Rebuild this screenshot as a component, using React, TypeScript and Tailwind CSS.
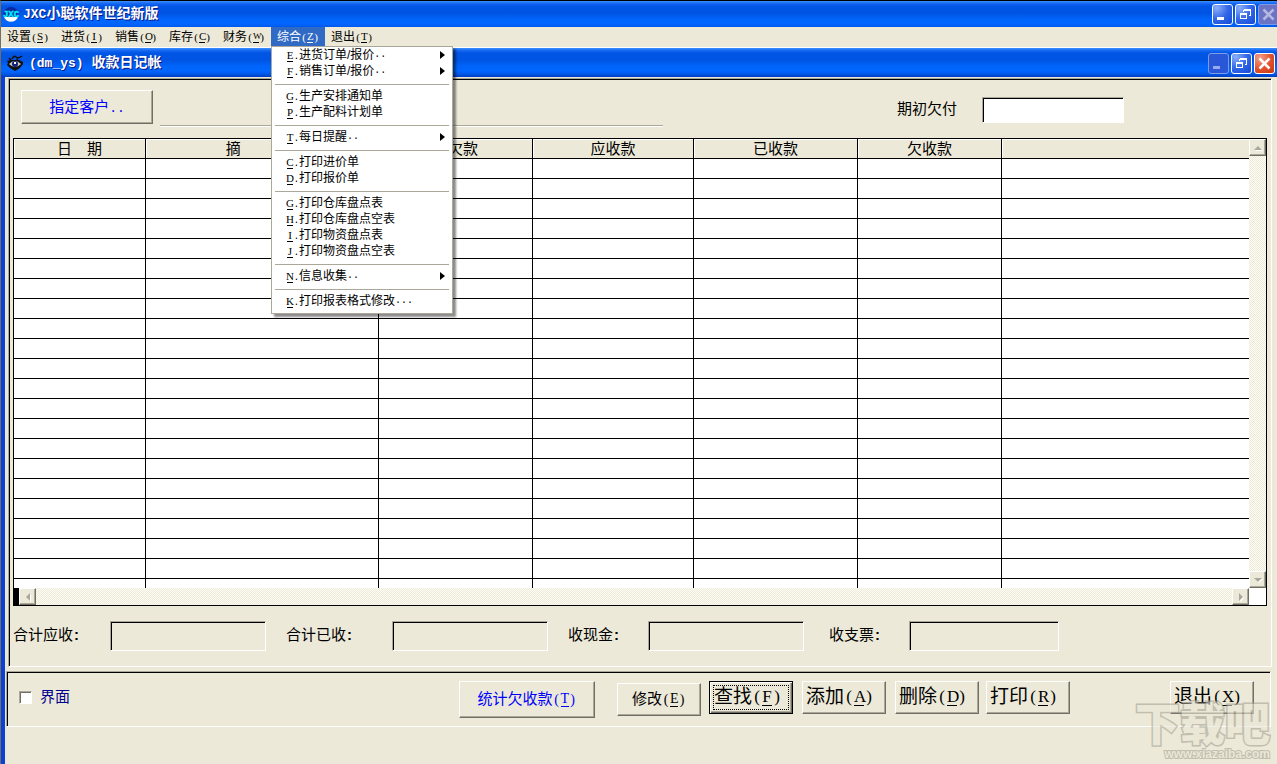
import React from 'react';
import clsx from 'clsx';

const menus = [
  { label: '设置', hotkey: 'S' },
  { label: '进货', hotkey: 'I' },
  { label: '销售', hotkey: 'O' },
  { label: '库存', hotkey: 'C' },
  { label: '财务', hotkey: 'W' },
  { label: '综合', hotkey: 'Z', open: true },
  { label: '退出', hotkey: 'T' },
];

const menuGroups = [
  [
    { hotkey: 'E', label: '进货订单/报价', dots: '..', sub: true },
    { hotkey: 'F', label: '销售订单/报价', dots: '..', sub: true },
  ],
  [
    { hotkey: 'G', label: '生产安排通知单' },
    { hotkey: 'P', label: '生产配料计划单' },
  ],
  [{ hotkey: 'T', label: '每日提醒', dots: '..', sub: true }],
  [
    { hotkey: 'C', label: '打印进价单' },
    { hotkey: 'D', label: '打印报价单' },
  ],
  [
    { hotkey: 'G', label: '打印仓库盘点表' },
    { hotkey: 'H', label: '打印仓库盘点空表' },
    { hotkey: 'I', label: '打印物资盘点表' },
    { hotkey: 'J', label: '打印物资盘点空表' },
  ],
  [{ hotkey: 'N', label: '信息收集', dots: '..', sub: true }],
  [{ hotkey: 'K', label: '打印报表格式修改', dots: '...' }],
];

const columns = [
  { title: '日　期', width: 'w-[132px]' },
  { title: '摘　　   要', width: 'w-[233px]' },
  { title: '前欠款', width: 'w-[154px]' },
  { title: '应收款', width: 'w-[161px]' },
  { title: '已收款', width: 'w-[164px]' },
  { title: '欠收款', width: 'w-[144px]' },
  { title: '', width: '' },
];

const totals = [
  { id: 'receivable', label: '合计应收', labelWidth: 'w-[97px]', width: 'w-[156px]', gap: '' },
  { id: 'received', label: '合计已收', labelWidth: 'w-[106px]', width: 'w-[156px]', gap: 'ml-5' },
  { id: 'cash', label: '收现金', labelWidth: 'w-20', width: 'w-[156px]', gap: 'ml-5' },
  { id: 'cheque', label: '收支票', labelWidth: 'w-20', width: 'w-[150px]', gap: 'ml-[25px]' },
];

const sunken =
  'border border-t-[#aca899] border-l-[#aca899] border-r-white border-b-white shadow-[inset_1px_1px_#000]';
const raised =
  'border border-t-white border-l-white border-r-[#716f64] border-b-[#716f64] shadow-[inset_-1px_-1px_#aca899] bg-[#ece9d8]';
const dither = 'bg-[repeating-conic-gradient(#fffef6_0_25%,#ece9d8_0_50%)] bg-[length:2px_2px]';
const titleBar =
  'bg-[linear-gradient(180deg,#3c94ff_0,#1c6cf4_2px,#0055e5_5px,#0054e3_12px,#0064fa_18px,#0066ff_23px,#0058e8_26px,#003dc0_100%)]';

// Accelerator such as (S), set in half-width cells
function Hotkey({ letter, size = 'sm' }: { letter: string; size?: 'sm' | 'md' | 'lg' }) {
  const cell = clsx('inline-block text-center', {
    'w-[6px]': size === 'sm',
    'w-[8px]': size === 'md',
    'w-[10px]': size === 'lg',
  });
  return (
    <span
      className={clsx('inline-flex items-center justify-center font-["Liberation_Serif",serif]', {
        'text-[11px] leading-[11px]': size === 'sm',
        'text-[14px] leading-[14px]': size === 'md',
        'text-[17px] leading-[17px]': size === 'lg',
      })}
    >
      <span className={cell}>(</span>
      <span
        className={clsx(
          cell,
          'flex justify-center border-b border-current',
          letter === 'W' && 'text-[9px]',
        )}
      >
        {letter}
      </span>
      <span className={cell}>)</span>
    </span>
  );
}

function CaptionButton({ kind, dim }: { kind: 'min' | 'restore' | 'close'; dim?: boolean }) {
  const names = { min: '最小化', restore: '还原', close: '关闭' };
  return (
    <button
      type="button"
      aria-label={names[kind]}
      className={clsx(
        'flex h-[21px] w-[21px] shrink-0 items-center justify-center rounded-[3px] border',
        dim ? 'border-[#7f9be8]' : 'border-white',
        kind === 'close' && !dim && 'bg-[radial-gradient(circle_at_25%_20%,#f0a088,#e2502c_55%,#c03810)]',
        kind === 'close' && dim && 'bg-[#6a73c4]',
        kind !== 'close' && !dim && 'bg-[radial-gradient(circle_at_20%_15%,#8cb0f8,#3468e8_50%,#1248d8)]',
        kind !== 'close' && dim && 'bg-[#2a56d8]',
      )}
    >
      <svg width="19" height="19" viewBox="0 0 19 19" shapeRendering="crispEdges" className={dim ? 'opacity-50' : ''}>
        {kind === 'min' && <path d="M4 12h7v3H4z" fill="#fff" />}
        {kind === 'restore' && (
          <path
            d="M7 4h7v6h-2M7 4v2M7 5h7M4 8h6v5H4zM4 9h6"
            transform="translate(.5 .5)"
            fill="none"
            stroke="#fff"
            strokeWidth="1"
          />
        )}
        {kind === 'close' && (
          <path d="M4.500 4.500l10 10M14.500 4.500l-10 10" stroke="#fff" strokeWidth="2.500" shapeRendering="auto" />
        )}
      </svg>
    </button>
  );
}

function ScrollButton({ dir }: { dir: 'up' | 'down' | 'left' | 'right' }) {
  const paths = {
    up: 'M3 9L7 5L11 9Z',
    down: 'M3 5L7 9L11 5Z',
    left: 'M9 3L5 7L9 11Z',
    right: 'M5 3L9 7L5 11Z',
  };
  const names = { up: '向上', down: '向下', left: '向左', right: '向右' };
  return (
    <button
      type="button"
      aria-label={names[dir]}
      className={clsx('flex h-[17px] w-[17px] shrink-0 items-center justify-center', raised)}
    >
      <svg width="14" height="14" viewBox="0 0 14 14">
        <path d={paths[dir]} fill="#fff" transform="translate(1 1)" />
        <path d={paths[dir]} fill="#aca899" />
      </svg>
    </button>
  );
}

function PopupMenu() {
  return (
    <div
      role="menu"
      className="absolute top-full left-0 z-20 w-[182px] border border-[#aca899] bg-white pb-1 text-black shadow-[3px_3px_2px_rgba(0,0,0,0.45)]"
    >
      {menuGroups.map((group, i) => (
        <div key={i}>
          {i > 0 && <hr className="mx-[3px] mt-[5px] mb-[3px] border-t border-[#aca899]" />}
          {group.map((item) => (
            <button
              key={item.hotkey}
              type="button"
              role="menuitem"
              className="flex h-4 w-full items-center pr-[7px] pl-[15px] text-[12px] leading-4 whitespace-nowrap"
            >
              <span className='flex w-[6px] justify-center border-b border-black font-["Liberation_Serif",serif] text-[11px] leading-[12px]'>
                {item.hotkey}
              </span>
              <span className="w-[6px] pl-px">.</span>
              <span>{item.label}</span>
              {item.dots && <span className='font-["Liberation_Mono",monospace] text-[10px]'>{item.dots}</span>}
              {item.sub && (
                <svg width="5" height="8" viewBox="0 0 5 8" className="ml-auto">
                  <path d="M0 0L5 4L0 8Z" />
                </svg>
              )}
            </button>
          ))}
        </div>
      ))}
    </div>
  );
}

function MainTitle() {
  return (
    <header className={clsx('flex h-[26px] items-center overflow-hidden pl-[2px]', titleBar)}>
      <svg width="16" height="17" viewBox="0 0 16 17" className="shrink-0">
        <circle cx="8" cy="8.500" r="7.500" fill="#0a2a9c" />
        <path d="M1 11h14a7.500 7.500 0 0 1-14 0z" fill="#fff" />
        <text x="8" y="10.500" textAnchor="middle" fontSize="9" fontWeight="700" fontFamily="Liberation Mono, monospace" fill="#00f0ff" stroke="#00f0ff" strokeWidth=".4">
          JXC
        </text>
      </svg>
      <h1 className="ml-1 flex-1 text-[14px] leading-5 font-bold whitespace-nowrap text-white [text-shadow:1px_1px_#0a1883]">
        <span className='font-["Liberation_Mono",monospace] text-[13px]'>JXC</span>小聪软件世纪新版
      </h1>
      <div className="-mr-[2px] flex shrink-0 gap-[2px]">
        <CaptionButton kind="min" />
        <CaptionButton kind="restore" />
        <CaptionButton kind="close" dim />
      </div>
    </header>
  );
}

function MenuBar() {
  return (
    <nav className="flex h-[21px] border-b border-white">
      {menus.map((menu) => (
        <div key={menu.label} className="relative h-[19px]">
          <button
            type="button"
            className={clsx(
              'flex h-[19px] w-[54px] items-center pt-px pl-[6px] text-[12px] leading-[18px]',
              menu.open && 'bg-[#316ac5] text-white',
            )}
          >
            {menu.label}
            <Hotkey letter={menu.hotkey} />
          </button>
          {menu.open && <PopupMenu />}
        </div>
      ))}
    </nav>
  );
}

function ChildTitle() {
  return (
    <header className={clsx('flex h-[29px] items-center pr-[2px] pl-[6px]', titleBar)}>
      <svg width="16" height="16" viewBox="0 0 16 16" className="shrink-0">
        <path d="M5 4Q7 0 9 2T15 1M2 3l3 3M11 2l-1 3" fill="none" stroke="#111" strokeWidth="1.500" />
        <path d="M0 6l3-1h9l4 2v2l-3 4-5 3-5-3-3-3 1-2z" fill="#111" />
        <path d="M2 9q6-6 12 0-6 6-12 0z" fill="#c9c5bc" />
        <circle cx="8" cy="9" r="3" fill="#15207c" />
        <path d="M7 7h2v2H7z" fill="#fff" />
      </svg>
      <h2 className="ml-[6px] flex-1 text-[14px] leading-5 font-bold whitespace-nowrap text-white [text-shadow:1px_1px_#0a1883]">
        <span className='font-["Liberation_Mono",monospace] text-[13px] whitespace-pre'>(dm_ys) </span>收款日记帐
      </h2>
      <div className="mt-px flex shrink-0 gap-[2px]">
        <CaptionButton kind="min" dim />
        <CaptionButton kind="restore" />
        <CaptionButton kind="close" />
      </div>
    </header>
  );
}

function Ledger() {
  return (
    <div className="border border-black">
      <div className="flex">
        <div className="h-[449px] min-w-0 flex-1 overflow-hidden bg-white">
          <table className="w-full table-fixed border-separate border-spacing-0">
            <thead>
              <tr>
                {columns.map((col, i) => (
                  <th
                    key={i}
                    className={clsx(
                      'h-5 border-b border-black bg-[#ece9d8] p-0 text-center text-[15px] leading-[18px] font-normal whitespace-pre shadow-[inset_1px_1px_#fff]',
                      i < columns.length - 1 && 'border-r',
                      col.width,
                    )}
                  >
                    {col.title}
                  </th>
                ))}
              </tr>
            </thead>
            <tbody>
              {Array.from({ length: 22 }, (_, row) => (
                <tr key={row}>
                  {columns.map((_col, i) => (
                    <td
                      key={i}
                      className={clsx('h-5 border-b border-black p-0', i < columns.length - 1 && 'border-r')}
                    />
                  ))}
                </tr>
              ))}
            </tbody>
          </table>
        </div>
        <div className={clsx('flex w-[17px] flex-col justify-between', dither)}>
          <ScrollButton dir="up" />
          <ScrollButton dir="down" />
        </div>
      </div>
      <div className="flex h-[17px]">
        <div className="w-[5px] bg-black" />
        <div className={clsx('flex flex-1 justify-between', dither)}>
          <ScrollButton dir="left" />
          <ScrollButton dir="right" />
        </div>
        <div className="w-[17px] bg-white" />
      </div>
    </div>
  );
}

function ActionButton({ label, hotkey, className }: { label: string; hotkey: string; className?: string }) {
  return (
    <button
      type="button"
      className={clsx('flex h-[33px] w-[84px] shrink-0 items-center pb-[2px] pl-[3px] text-[19px] leading-6', raised, className)}
    >
      {label}
      <Hotkey letter={hotkey} size="lg" />
    </button>
  );
}

function ActionBar() {
  return (
    <section className={clsx('mt-1 mr-[6px] ml-px flex items-start pt-[9px] pr-4 pb-2 pl-3', sunken)}>
      <label className="flex h-8 w-[440px] items-center gap-2 text-[15px] text-[#000090]">
        <input
          type="checkbox"
          className="h-[13px] w-[13px] appearance-none border border-t-[#aca899] border-r-white border-b-white border-l-[#aca899] bg-white shadow-[inset_1px_1px_#716f64]"
        />
        界面
      </label>
      <button
        type="button"
        className={clsx('flex h-[37px] w-[136px] shrink-0 items-center justify-center text-[15px] text-[#0000ff]', raised)}
      >
        统计欠收款
        <Hotkey letter="T" size="md" />
      </button>
      <button
        type="button"
        className={clsx('mt-[2px] ml-[22px] flex h-[33px] w-[84px] shrink-0 items-center justify-center text-[15px]', raised)}
      >
        修改
        <Hotkey letter="E" size="md" />
      </button>
      <button
        type="button"
        className="ml-2 h-[33px] w-[84px] shrink-0 border border-black bg-[#ece9d8] p-[3px] text-[19px] shadow-[inset_1px_1px_#fff,inset_-1px_-1px_#716f64,inset_-2px_-2px_#aca899]"
      >
        <span className="flex h-full items-center border border-dotted border-black pb-[2px] leading-5">
          查找
          <Hotkey letter="F" size="lg" />
        </span>
      </button>
      <ActionButton label="添加" hotkey="A" className="ml-[9px]" />
      <ActionButton label="删除" hotkey="D" className="ml-[9px]" />
      <ActionButton label="打印" hotkey="R" className="ml-[7px]" />
      <ActionButton label="退出" hotkey="X" className="ml-auto" />
    </section>
  );
}

function Watermark() {
  return (
    <div className="pointer-events-none absolute right-[7px] bottom-[3px] text-right font-bold whitespace-nowrap opacity-60 [paint-order:stroke_fill]">
      <div className="text-[45px] leading-[43px] font-black text-[#e9e6d6] [-webkit-text-stroke:3px_#a5a294]">下载吧</div>
      <div className='font-["Liberation_Sans",sans-serif] text-[12px] leading-[14px] text-[#e9e6d6] [-webkit-text-stroke:2px_#a5a294]'>
        www.xiazaiba.com
      </div>
    </div>
  );
}

function App() {
  return (
    <div className='flex min-h-screen flex-col border-t border-l border-t-black border-l-[#716f64] bg-[#ece9d8] font-["Liberation_Sans","Noto_Sans_CJK_SC",sans-serif] text-black'>
      <MainTitle />
      <MenuBar />
      <main className="relative flex flex-1 flex-col">
        <ChildTitle />
        <div className="flex-1 border-l-4 border-[#0a3fd8] pt-px">
          <section className={clsx('mr-[5px] ml-[3px] px-1', sunken)}>
            <div className="flex h-[59px] items-start pl-2">
              <button
                type="button"
                className={clsx('mt-[11px] h-[34px] w-[132px] shrink-0 text-[15px] text-[#0000ff]', raised)}
              >
                指定客户<span className='font-["Liberation_Mono",monospace] text-[13px]'>..</span>
              </button>
              <div className="mt-[46px] ml-[7px] w-[503px] border-t border-b border-t-[#aca899] border-b-white" />
              <label htmlFor="opening" className="mt-[18px] ml-[234px] w-[85px] text-[15px] leading-6 whitespace-nowrap">
                期初欠付
              </label>
              <input id="opening" type="text" className={clsx('mt-[18px] h-[26px] w-[142px] bg-white px-1 text-[15px]', sunken)} />
            </div>
            <Ledger />
            <div className="flex items-center py-[15px]">
              {totals.map((total) => (
                <div key={total.id} className={clsx('flex items-center', total.gap)}>
                  <label htmlFor={total.id} className={clsx('pb-[2px] text-[15px] leading-6 whitespace-nowrap', total.labelWidth)}>
                    {total.label}
                    <span className="pl-px font-bold">:</span>
                  </label>
                  <input
                    id={total.id}
                    type="text"
                    readOnly
                    className={clsx('h-[30px] bg-transparent px-1 text-[15px]', total.width, sunken)}
                  />
                </div>
              ))}
            </div>
          </section>
          <ActionBar />
        </div>
        <Watermark />
      </main>
    </div>
  );
}

export default App;
